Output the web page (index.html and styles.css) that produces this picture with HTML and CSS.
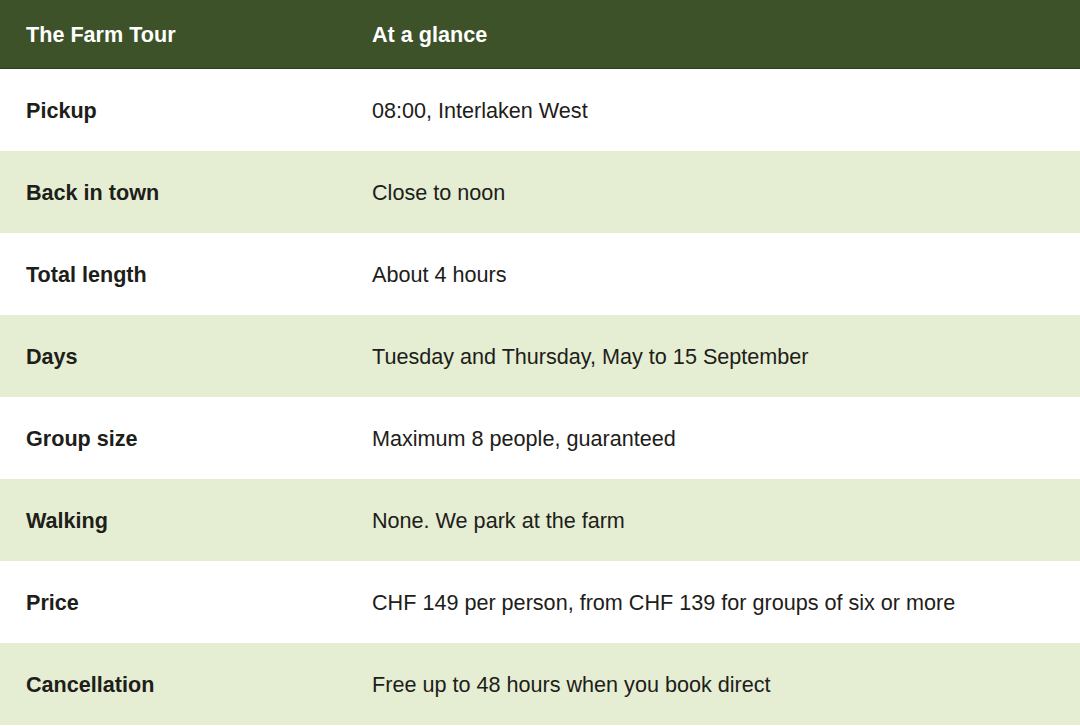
FILE: index.html
```html
<!DOCTYPE html>
<html lang="en">
<head>
<meta charset="utf-8">
<title>The Farm Tour</title>
<link rel="stylesheet" href="styles.css">
</head>
<body>
<table class="tour">
  <colgroup>
    <col class="col-label">
    <col class="col-value">
  </colgroup>
  <thead>
    <tr>
      <th>The Farm Tour</th>
      <th>At a glance</th>
    </tr>
  </thead>
  <tbody>
    <tr><th>Pickup</th><td>08:00, Interlaken West</td></tr>
    <tr><th>Back in town</th><td>Close to noon</td></tr>
    <tr><th>Total length</th><td>About 4 hours</td></tr>
    <tr><th>Days</th><td>Tuesday and Thursday, May to 15 September</td></tr>
    <tr><th>Group size</th><td>Maximum 8 people, guaranteed</td></tr>
    <tr><th>Walking</th><td>None. We park at the farm</td></tr>
    <tr><th>Price</th><td>CHF 149 per person, from CHF 139 for groups of six or more</td></tr>
    <tr><th>Cancellation</th><td>Free up to 48 hours when you book direct</td></tr>
  </tbody>
</table>
</body>
</html>
```

FILE: styles.css
```css
html, body {
  margin: 0;
  padding: 0;
  background: #ffffff;
}

body {
  font-family: "Liberation Sans", Arial, Helvetica, sans-serif;
  color: #1d2019;
}

.tour {
  width: 100%;
  border-collapse: collapse;
  table-layout: fixed;
  font-size: 21.6px;
  line-height: 1.2;
}

.col-label {
  width: 346px;
}

.tour th,
.tour td {
  padding: 2px 26px 0;
  text-align: left;
  vertical-align: middle;
}

.tour thead th {
  height: 66px;
  background: #3e5229;
  color: #ffffff;
  font-weight: bold;
  border-bottom: 1px solid #2f4020;
}

.tour tbody th {
  font-weight: bold;
}

.tour tbody td {
  font-weight: normal;
}

.tour tbody tr {
  height: 82px;
}

.tour tbody tr:nth-child(even) {
  background: #e5eed3;
}
```
